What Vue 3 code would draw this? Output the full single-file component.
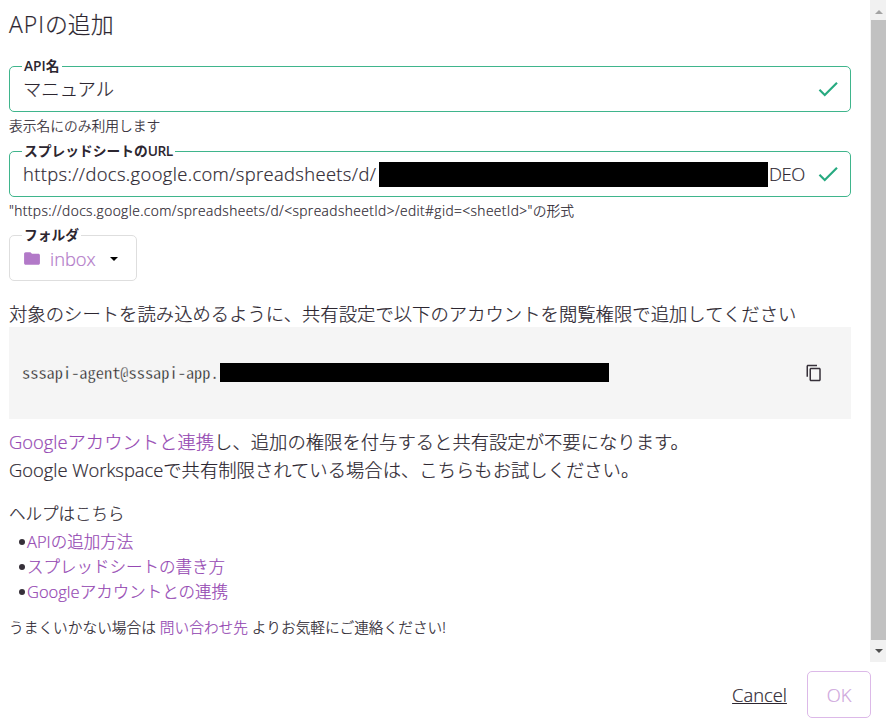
<template>
  <div class="dialog">
    <div class="dialog-body">
      <main class="content">
        <h1 class="title"><span class="title-latin">API</span>の追加</h1>

        <div class="field valid">
          <label class="field-label">API名</label>
          <span class="value">マニュアル</span>
          <svg class="check" viewBox="0 0 24 24"><path d="M9 16.17 4.83 12l-1.42 1.41L9 19 21 7l-1.41-1.41z" /></svg>
        </div>
        <p class="hint">表示名にのみ利用します</p>

        <div class="field valid">
          <label class="field-label">スプレッドシートの<span class="label-latin">URL</span></label>
          <span class="value url">https://docs.google.com/spreadsheets/d/</span>
          <span class="mask mask-url"></span>
          <span class="value tail">DEO</span>
          <svg class="check" viewBox="0 0 24 24"><path d="M9 16.17 4.83 12l-1.42 1.41L9 19 21 7l-1.41-1.41z" /></svg>
        </div>
        <p class="hint hint-last"><span class="hint-url">"https://docs.google.com/spreadsheets/d/&lt;spreadsheetId&gt;/edit#gid=&lt;sheetId&gt;"</span>の形式</p>

        <div class="field folder">
          <label class="field-label">フォルダ</label>
          <svg class="folder-icon" viewBox="0 0 24 24"><path d="M10 4H4c-1.1 0-2 .9-2 2v12c0 1.1.9 2 2 2h16c1.1 0 2-.9 2-2V8c0-1.1-.9-2-2-2h-8z" /></svg>
          <span class="folder-name">inbox</span>
          <svg class="caret" viewBox="0 0 8 4"><path d="M0 0h8L4 4z" /></svg>
        </div>

        <p class="lead">対象のシートを読み込めるように、共有設定で以下のアカウントを閲覧権限で追加してください</p>
        <div class="account">
          <code class="mail">sssapi-agent@sssapi-app.</code>
          <span class="mask mask-mail"></span>
          <svg class="copy" viewBox="0 0 24 24"><path d="M16 1H4c-1.1 0-2 .9-2 2v14h2V3h12zm3 4H8c-1.1 0-2 .9-2 2v14c0 1.1.9 2 2 2h11c1.1 0 2-.9 2-2V7c0-1.1-.9-2-2-2m0 16H8V7h11z" /></svg>
        </div>

        <p class="note"><a>Googleアカウントと連携</a>し、追加の権限を付与すると共有設定が不要になります。</p>
        <p class="note">Google Workspaceで共有制限されている場合は、こちらもお試しください。</p>

        <p class="help-title">ヘルプはこちら</p>
        <ul class="help">
          <li v-for="link in links" :key="link"><a>{{ link }}</a></li>
        </ul>
        <p class="contact">うまくいかない場合は <a>問い合わせ先</a> よりお気軽にご連絡ください!</p>
      </main>

      <div class="scrollbar">
        <span class="arrow"><svg viewBox="0 0 8 4"><path d="M0 4h8L4 0z" fill="#a3a3a3" /></svg></span>
        <span class="thumb"></span>
        <span class="arrow"><svg viewBox="0 0 8 4"><path d="M0 0h8L4 4z" fill="#505050" /></svg></span>
      </div>
    </div>

    <footer class="actions">
      <button class="cancel">Cancel</button>
      <button class="ok">OK</button>
    </footer>
  </div>
</template>

<script setup>
const links = [
  'APIの追加方法',
  'スプレッドシートの書き方',
  'Googleアカウントとの連携',
]
</script>

<style>
body {
  margin: 0;
  background: #fff;
}
</style>

<style scoped>
.dialog {
  width: 886px;
  height: 722px;
  overflow: hidden;
  color: #2c2630;
  font-family: "Open Sans", "Noto Sans CJK JP", sans-serif;
  font-size: 18.33px;
  font-weight: 300;
  -webkit-text-stroke: 0.2px;
  white-space: nowrap;
}

.dialog-body {
  display: flex;
  height: 662px;
}

.content {
  box-sizing: border-box;
  width: 870px;
  padding: 10px 19px 0 9px;
}

p, h1, ul {
  margin: 0;
  padding: 0;
}

a {
  color: #9548b3;
}

.title {
  height: 56px;
  font-size: 22.9px;
  font-weight: 300;
  line-height: 30px;
}

.title-latin {
  letter-spacing: 1px;
}

/* ── Fields ───────────────────────── */
.field {
  position: relative;
  box-sizing: border-box;
  display: flex;
  align-items: center;
  height: 46px;
  padding: 0 11px 0 13px;
  border: 1px solid #dedede;
  border-radius: 5px;
}

.field.valid {
  border-color: #3fb58c;
}

.field-label {
  position: absolute;
  top: -11px;
  left: 12px;
  padding: 0 2px;
  background: #fff;
  font-size: 13.75px;
  font-weight: 600;
  line-height: 20px;
  -webkit-text-stroke: 0;
}

.label-latin {
  letter-spacing: -0.5px;
}

.value {
  line-height: 30px;
}

.url {
  width: 356px;
  letter-spacing: 0.38px;
}

.mask {
  background: #000;
}

.mask-url {
  width: 389px;
  height: 25px;
}

.tail {
  margin-left: 1px;
  letter-spacing: -0.4px;
}

.check {
  width: 26px;
  height: 26px;
  margin-left: auto;
  margin-right: -2px;
  fill: #27aa80;
}

.hint {
  height: 39px;
  font-size: 13.75px;
  line-height: 28px;
}

.hint-last {
  height: 38px;
}

.hint-url {
  letter-spacing: 0.41px;
}

.folder {
  width: 128px;
  padding-left: 12px;
}

.folder-icon {
  width: 20px;
  height: 19px;
  margin-right: 8px;
  fill: #b279c8;
}

.folder-name {
  width: 60px;
  color: #b279c8;
}

.caret {
  width: 8px;
  height: 4px;
  margin-top: 2px;
}

/* ── Shared account ───────────────── */
.lead {
  margin-top: 18px;
  height: 28px;
  line-height: 30px;
  letter-spacing: 0.02px;
}

.account {
  box-sizing: border-box;
  display: flex;
  align-items: center;
  height: 92px;
  margin-bottom: 9px;
  padding: 0 28px 0 13px;
  background: #f5f5f5;
}

.mail {
  width: 198px;
  margin-bottom: 3px;
  color: #222;
  font-family: "Noto Sans Mono CJK JP", "Liberation Mono", monospace;
  font-size: 16.4px;
  -webkit-text-stroke: 0.3px #f5f5f5;
}

.mask-mail {
  width: 389px;
  height: 19px;
  margin-bottom: 1px;
}

.copy {
  width: 18px;
  height: 18px;
  margin-left: auto;
  fill: #363039;
}

.note {
  height: 28px;
  line-height: 28px;
}

/* ── Help ─────────────────────────── */
.help-title {
  margin-top: 16px;
  height: 29px;
  font-size: 16.5px;
  line-height: 28px;
}

.help {
  list-style: none;
  font-size: 16.5px;
  line-height: 25px;
}

.help li {
  display: flex;
  align-items: center;
  height: 25px;
}

.help li::before {
  content: "";
  width: 6px;
  height: 6px;
  margin: 0 2px 0 10px;
  border-radius: 50%;
  background: #363039;
}

.contact {
  margin-top: 11px;
  font-size: 14.67px;
  line-height: 24px;
  letter-spacing: 0.04px;
}

/* ── Scrollbar ────────────────────── */
.scrollbar {
  display: flex;
  flex-direction: column;
  width: 16px;
  background: #f1f1f1;
}

.arrow {
  display: flex;
  align-items: center;
  justify-content: center;
  height: 22px;
}

.arrow svg {
  width: 8px;
  height: 4px;
  margin-left: 2px;
}

.arrow:first-child {
  height: 20px;
  padding-top: 3px;
  box-sizing: border-box;
}

.thumb {
  flex: 1;
  margin-left: 1px;
  background: #c1c1c1;
}

/* ── Actions ──────────────────────── */
.actions {
  display: flex;
  justify-content: flex-end;
  gap: 20px;
  padding: 9px 15px 0 0;
}

button {
  height: 47px;
  padding: 0;
  border: 0;
  background: none;
  color: inherit;
  font: inherit;
}

.cancel {
  width: 55px;
  text-decoration: underline;
}

.ok {
  width: 64px;
  border: 1px solid #dcb9e8;
  border-radius: 5px;
  color: #cda4dc;
}
</style>
